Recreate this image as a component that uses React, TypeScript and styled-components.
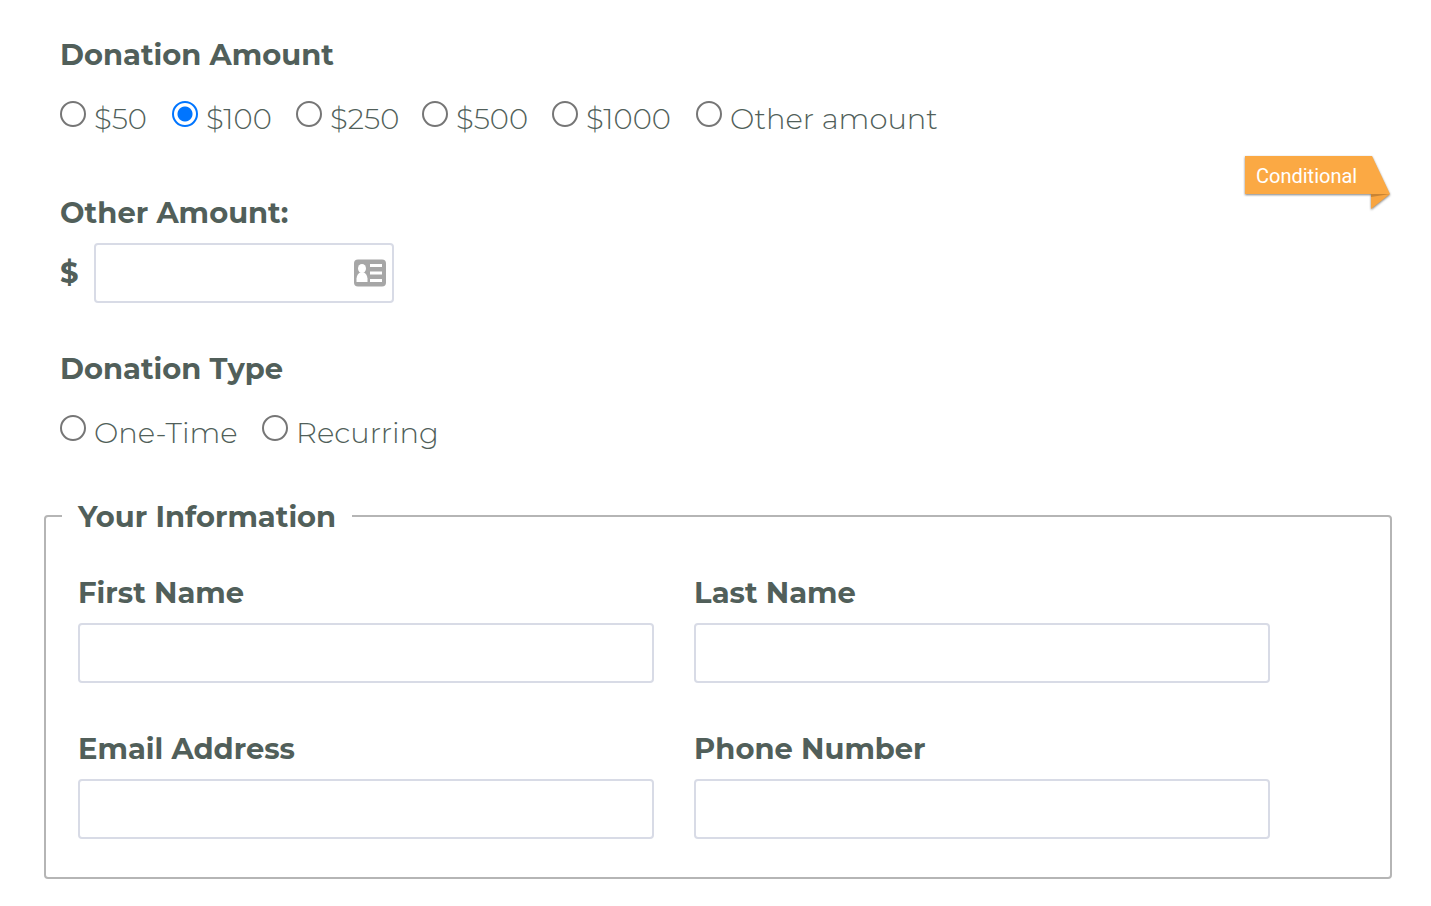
import React from "react";
import styled, { createGlobalStyle } from "styled-components";

const GlobalStyle = createGlobalStyle`
  * { box-sizing: border-box; }
  body {
    margin: 0;
    background: #fff;
    color: #515f5a;
    font-family: Montserrat, Inter, sans-serif;
    font-size: 29px;
    line-height: 36px;
  }
`;

const Form = styled.form`
  padding: 37px 39px 27px 44px;
`;

const ChoiceGroup = styled.fieldset`
  margin: 0 0 46px;
  padding: 0 16px;
  border: 0;
  min-width: 0;
`;

const GroupTitle = styled.legend`
  padding: 0;
  margin-bottom: 28px;
  font-weight: 700;
`;

const Choices = styled.div<{ $columns: string }>`
  display: grid;
  grid-template-columns: ${(p) => p.$columns};
`;

const Choice = styled.label`
  display: flex;
  align-items: flex-start;
  gap: 8px;
  font-weight: 300;
  white-space: nowrap;
`;

const Radio = styled.input`
  appearance: none;
  flex: none;
  width: 26px;
  height: 26px;
  margin: 0;
  border: 2px solid #767676;
  border-radius: 50%;
  background: #fff;

  &:checked {
    border-color: #0075ff;
    background: radial-gradient(circle, #0075ff 7px, #fff 8px);
  }
`;

const ConditionalGroup = styled.div`
  position: relative;
  margin-bottom: 48px;
  padding: 12px 16px 0;
`;

const Ribbon = styled.div`
  position: absolute;
  top: -28px;
  right: 1px;
  width: 148px;
  height: 56px;
  padding: 0 13px;
  color: #fff;
  font: 400 20px/42px Roboto, sans-serif;
`;

const RibbonShape = styled.svg`
  position: absolute;
  inset: 0;
  z-index: -1;
  overflow: visible;
  filter: drop-shadow(0 1px 1px rgba(0, 0, 0, 0.5));
`;

const Label = styled.label`
  display: block;
  margin-bottom: 12px;
  font-weight: 700;
`;

const AmountRow = styled.div`
  display: flex;
  align-items: center;
  gap: 16px;
`;

const Currency = styled.span`
  width: 18px;
  font-weight: 700;
`;

const AmountBox = styled.div`
  position: relative;
  width: 300px;
`;

const TextInput = styled.input`
  display: block;
  width: 100%;
  height: 60px;
  padding: 0 12px;
  border: 2px solid #d8dbe6;
  border-radius: 4px;
  background: #fff;
  color: inherit;
  font: inherit;
`;

const ContactIcon = styled.svg`
  position: absolute;
  top: 16px;
  right: 8px;
`;

const Information = styled.fieldset`
  margin: 0;
  padding: 40px 32px 38px;
  border: 2px solid #b5b5b5;
  border-radius: 4px;
  min-width: 0;
`;

const InformationTitle = styled.legend`
  margin-left: -16px;
  padding: 2px 16px 0;
  font-weight: 700;
`;

const Fields = styled.div`
  display: grid;
  grid-template-columns: 45% 45%;
  gap: 48px 40px;
`;

type RadioGroupProps = {
  title: string;
  name: string;
  options: string[];
  columns: string;
  selected?: string;
};

function RadioGroup({ title, name, options, columns, selected }: RadioGroupProps) {
  return (
    <ChoiceGroup>
      <GroupTitle>{title}</GroupTitle>
      <Choices $columns={columns}>
        {options.map((option) => (
          <Choice key={option}>
            <Radio type="radio" name={name} value={option} defaultChecked={option === selected} />
            {option}
          </Choice>
        ))}
      </Choices>
    </ChoiceGroup>
  );
}

const fields = [
  { id: "first-name", label: "First Name", type: "text" },
  { id: "last-name", label: "Last Name", type: "text" },
  { id: "email", label: "Email Address", type: "email" },
  { id: "phone", label: "Phone Number", type: "tel" },
];

export default function App() {
  return (
    <>
      <GlobalStyle />
      <Form>
        <RadioGroup
          title="Donation Amount"
          name="amount"
          options={["$50", "$100", "$250", "$500", "$1000", "Other amount"]}
          columns="112px 124px 126px 130px 144px auto"
          selected="$100"
        />
        <ConditionalGroup>
          <Ribbon>
            <RibbonShape width="148" height="56" viewBox="0 0 148 56" aria-hidden="true">
              <path d="M128 38V54L147 39Z" fill="#f8a541" />
              <path d="M128 39V42L147 39Z" fill="#c88434" />
              <path d="M2 1H129L147 39H2Z" fill="#fba944" />
            </RibbonShape>
            Conditional
          </Ribbon>
          <Label htmlFor="other-amount">Other Amount:</Label>
          <AmountRow>
            <Currency>$</Currency>
            <AmountBox>
              <TextInput id="other-amount" type="text" inputMode="decimal" />
              <ContactIcon width="32" height="28" viewBox="0 0 32 28" aria-hidden="true">
                <rect y="0.500" width="32" height="27" rx="4" fill="#a6a6a6" />
                <ellipse cx="8" cy="9.500" rx="4" ry="4.500" fill="#fff" />
                <path d="M2.500 23V19.500Q3 15 6 13.500H10Q13 15 13.500 19.500V23Z" fill="#fff" />
                <path d="M16 5H28V8H16ZM16 12.500H28V15.500H16ZM16 20H28V23H16Z" fill="#fff" />
              </ContactIcon>
            </AmountBox>
          </AmountRow>
        </ConditionalGroup>
        <RadioGroup
          title="Donation Type"
          name="type"
          options={["One-Time", "Recurring"]}
          columns="202px auto"
        />
        <Information>
          <InformationTitle>Your Information</InformationTitle>
          <Fields>
            {fields.map((field) => (
              <div key={field.id}>
                <Label htmlFor={field.id}>{field.label}</Label>
                <TextInput id={field.id} type={field.type} />
              </div>
            ))}
          </Fields>
        </Information>
      </Form>
    </>
  );
}
